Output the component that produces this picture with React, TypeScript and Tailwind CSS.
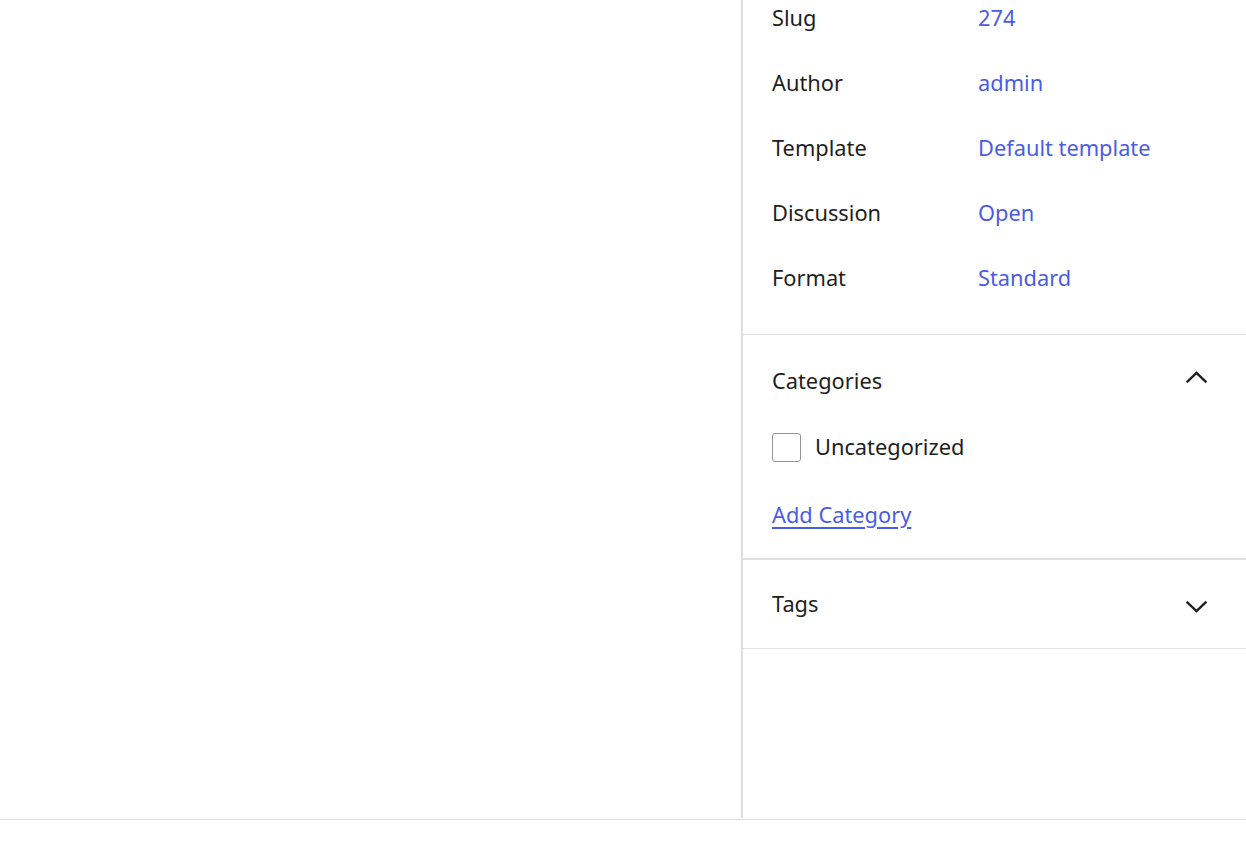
const rows = [
  { label: 'Slug', value: '274' },
  { label: 'Author', value: 'admin' },
  { label: 'Template', value: 'Default template' },
  { label: 'Discussion', value: 'Open' },
  { label: 'Format', value: 'Standard' },
];

function Chevron({ up, className }: { up?: boolean; className?: string }) {
  return (
    <svg width="21" height="12" viewBox="0 0 21 12" fill="none" className={`shrink-0 ${className ?? ''}`}>
      <polyline
        points={up ? '1.5,10.5 10.5,2 19.5,10.5' : '1.5,1.5 10.5,10 19.5,1.5'}
        stroke="#1e1e1e"
        strokeWidth="2.4"
        strokeLinecap="square"
      />
    </svg>
  );
}

export default function App() {
  return (
    <div className="bg-white text-[#1e1e1e] text-[21.8px]" style={{ fontFamily: '"Noto Sans", "Open Sans", sans-serif' }}>
      <div className="flex h-[820px] border-b border-[#dddddd]">
        {/* editor canvas */}
        <div className="w-[743px] h-[818px] border-r-2 border-[#dddddd]"></div>

        {/* settings sidebar */}
        <div className="flex-1 flex flex-col">
          <div className="flex flex-col gap-[29px] pl-[29px] pb-[38px] border-b border-[#e0e0e0]">
            {rows.map((row) => (
              <div key={row.label} className="flex items-center h-[36px]">
                <span className="w-[206px]">{row.label}</span>
                <span className="text-[#4a5ce6]">{row.value}</span>
              </div>
            ))}
          </div>

          <div className="pl-[29px] pr-[39px] pt-[28px] pb-[25px] border-b-2 border-[#e0e0e0]">
            <div className="flex items-center justify-between h-[36px]">
              <span>Categories</span>
              <Chevron up className="-mt-[8px]" />
            </div>
            <div className="flex items-center gap-[14px] mt-[30px] h-[36px]">
              <div className="w-[29px] h-[29px] rounded-[3px] border border-[#949494] bg-white"></div>
              <span>Uncategorized</span>
            </div>
            <div className="mt-[32px] h-[36px] flex items-center">
              <a href="#" className="text-[#4a5ce6] underline underline-offset-[4px]">Add Category</a>
            </div>
          </div>

          <div className="pl-[29px] pr-[39px] h-[89px] flex items-center justify-between border-b border-[#e0e0e0]">
            <span>Tags</span>
            <Chevron className="mt-[5px]" />
          </div>
        </div>
      </div>
    </div>
  );
}
